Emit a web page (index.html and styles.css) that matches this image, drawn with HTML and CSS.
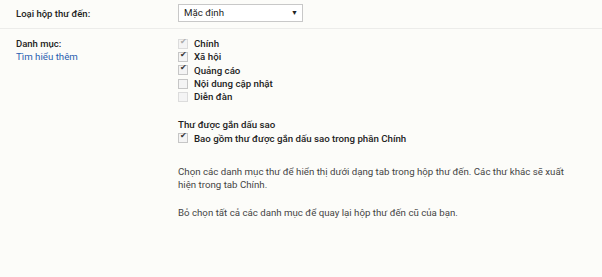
FILE: index.html
```html
<!DOCTYPE html>
<html>
  <head>
    <meta charset="UTF-8">
    <title>Cài đặt hộp thư đến</title>
    <link rel="stylesheet" href="styles.css">
  </head>
  <body>
    <div class="row top">
      <div class="label"><b>Loại hộp thư đến:</b></div>
      <div class="value">
        <div class="select">Mặc định <span class="arrow">&#9660;</span></div>
      </div>
    </div>
    <div class="row">
      <div class="label">
        <b>Danh mục:</b><br>
        <a href="#">Tìm hiểu thêm</a>
      </div>
      <div class="value">
        <div class="check dis on"><span class="box"></span><b>Chính</b></div>
        <div class="check on"><span class="box"></span><b>Xã hội</b></div>
        <div class="check on"><span class="box"></span><b>Quảng cáo</b></div>
        <div class="check"><span class="box"></span><b>Nội dung cập nhật</b></div>
        <div class="check dis"><span class="box"></span><b>Diễn đàn</b></div>

        <div class="sub"><b>Thư được gắn dấu sao</b></div>
        <div class="check on"><span class="box"></span><b>Bao gồm thư được gắn dấu sao trong phần Chính</b></div>

        <p class="note">Chọn các danh mục thư để hiển thị dưới dạng tab trong hộp thư đến. Các thư khác sẽ xuất hiện trong tab Chính.</p>
        <p class="note">Bỏ chọn tất cả các danh mục để quay lại hộp thư đến cũ của bạn.</p>
      </div>
    </div>
  </body>
</html>
```

FILE: styles.css
```css
/* settings panel */
body {
  margin: 0;
  background-color: #fcfcf9;
  font-family: Roboto, "Liberation Sans", Arial, sans-serif;
  font-size: 9.7px;
  color: #222;
}
b {
  font-weight: 500;
}
.label b {
  font-size: 9.5px;
}
.row {
  display: flex;
  padding-left: 16px;
}
.top {
  padding-top: 4px;
  height: 24px;
  border-bottom: 1px solid #ececea;
}
.label {
  width: 162px;
  line-height: 13px;
}
.top .label {
  padding-top: 3px;
}
.row + .row {
  padding-top: 8px;
}
a {
  color: #2a5db0;
  text-decoration: none;
}
.select {
  width: 114px;
  height: 16px;
  border: 1px solid #c8c8c8;
  background-color: #fff;
  padding-left: 5px;
  padding-right: 4px;
  line-height: 16px;
  display: flex;
  justify-content: space-between;
}
.arrow {
  font-size: 7px;
}
.check {
  display: flex;
  align-items: center;
  height: 13.3px;
}
.box {
  width: 8px;
  height: 8px;
  border: 1px solid #c6c6c6;
  background-color: #f4f4f4;
  margin-right: 6px;
  position: relative;
}
.on .box::after {
  content: "\2714";
  position: absolute;
  left: 1px;
  top: -3px;
  font-size: 8px;
  color: #333;
}
.dis .box {
  border-color: #dcdcdc;
}
.dis.on .box::after {
  color: #aaa;
}
.sub {
  margin-top: 15px;
  line-height: 13px;
}
.note {
  margin: 0;
  margin-top: 20px;
  width: 400px;
  line-height: 13px;
  color: #444;
}
.note + .note {
  margin-top: 15px;
}
```
